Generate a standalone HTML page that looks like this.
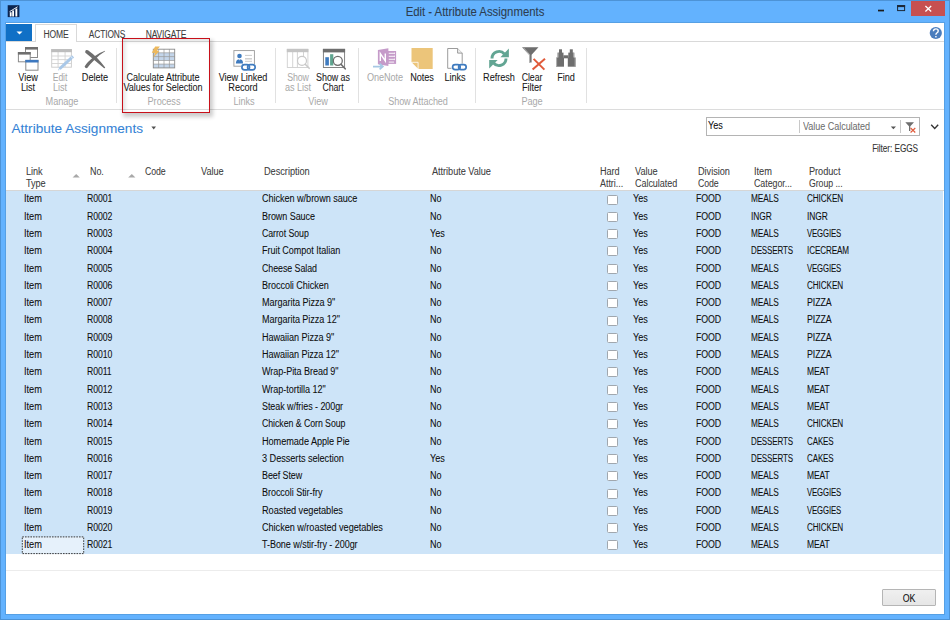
<!DOCTYPE html>
<html><head><meta charset="utf-8"><style>
html,body{margin:0;padding:0;width:950px;height:620px;overflow:hidden;background:#63b2fe}
body{position:relative;font-family:"Liberation Sans",sans-serif}
.t{position:absolute;white-space:pre;-webkit-text-stroke:0.07px currentColor}
.r{position:absolute}
svg{position:absolute;left:0;top:0}
</style></head><body>
<div class="r" style="left:0px;top:0px;width:950px;height:620px;background:#63b2fe"></div>
<div class="r" style="left:0px;top:0px;width:950px;height:1px;background:#4d93d6"></div>
<div class="r" style="left:0px;top:0px;width:1px;height:620px;background:#4d93d6"></div>
<div class="r" style="left:949px;top:0px;width:1px;height:620px;background:#4d93d6"></div>
<div class="r" style="left:0px;top:619px;width:950px;height:1px;background:#4d93d6"></div>
<div class="r" style="left:5px;top:22px;width:940px;height:593px;background:#56a0e4"></div>
<div class="r" style="left:6px;top:23px;width:938px;height:591px;background:#ffffff"></div>
<div class="t" style="left:324.50px;width:300px;text-align:center;top:5.54px;font-size:12px;line-height:12px;color:#2d3d4f;letter-spacing:-0.029px;transform:scaleX(0.9503);transform-origin:center">Edit - Attribute Assignments</div>
<div class="r" style="left:911px;top:1px;width:34px;height:14.5px;background:#c75050"></div>
<div class="r" style="left:6px;top:41px;width:938px;height:1px;background:#d9d9d9"></div>
<div class="r" style="left:6px;top:24px;width:26px;height:17px;background:#1070c6"></div>
<div class="r" style="left:34.5px;top:23.5px;width:42.5px;height:18px;background:#ffffff;border:1px solid #d9d9d9;border-bottom:none;box-sizing:border-box"></div>
<div class="r" style="left:35.5px;top:41px;width:40.5px;height:1px;background:#ffffff"></div>
<div class="t" style="left:-94.30px;width:300px;text-align:center;top:30.00px;font-size:10px;line-height:10px;color:#3c3c3c;letter-spacing:-0.123px;transform:scaleX(0.8518);transform-origin:center">HOME</div>
<div class="t" style="left:-43.30px;width:300px;text-align:center;top:30.00px;font-size:10px;line-height:10px;color:#3c3c3c;letter-spacing:-0.113px;transform:scaleX(0.8398);transform-origin:center">ACTIONS</div>
<div class="t" style="left:16.00px;width:300px;text-align:center;top:30.00px;font-size:10px;line-height:10px;color:#3c3c3c;letter-spacing:-0.110px;transform:scaleX(0.8434);transform-origin:center">NAVIGATE</div>
<div class="r" style="left:6px;top:109px;width:938px;height:1px;background:#dcdcdc"></div>
<div class="r" style="left:115.5px;top:48px;width:1px;height:55px;background:#e1e1e1"></div>
<div class="r" style="left:275.4px;top:48px;width:1px;height:55px;background:#e1e1e1"></div>
<div class="r" style="left:358.2px;top:48px;width:1px;height:55px;background:#e1e1e1"></div>
<div class="r" style="left:474.7px;top:48px;width:1px;height:55px;background:#e1e1e1"></div>
<div class="r" style="left:586.3px;top:48px;width:1px;height:55px;background:#e1e1e1"></div>
<div class="t" style="left:-122.50px;width:300px;text-align:center;top:73.00px;font-size:10px;line-height:10px;color:#1a1a1a;letter-spacing:-0.052px;transform:scaleX(0.9140);transform-origin:center">View</div>
<div class="t" style="left:-122.50px;width:300px;text-align:center;top:83.00px;font-size:10px;line-height:10px;color:#1a1a1a;letter-spacing:-0.038px;transform:scaleX(0.9117);transform-origin:center">List</div>
<div class="t" style="left:-89.70px;width:300px;text-align:center;top:73.00px;font-size:10px;line-height:10px;color:#a8a8a8;letter-spacing:-0.068px;transform:scaleX(0.8587);transform-origin:center;-webkit-text-stroke:0">Edit</div>
<div class="t" style="left:-89.70px;width:300px;text-align:center;top:83.00px;font-size:10px;line-height:10px;color:#a8a8a8;letter-spacing:-0.038px;transform:scaleX(0.9117);transform-origin:center;-webkit-text-stroke:0">List</div>
<div class="t" style="left:-55.50px;width:300px;text-align:center;top:73.00px;font-size:10px;line-height:10px;color:#1a1a1a;letter-spacing:-0.045px;transform:scaleX(0.9167);transform-origin:center">Delete</div>
<div class="t" style="left:-88.40px;width:300px;text-align:center;top:97.00px;font-size:10px;line-height:10px;color:#a9a9a9;letter-spacing:-0.055px;transform:scaleX(0.9177);transform-origin:center;-webkit-text-stroke:0">Manage</div>
<div class="t" style="left:12.50px;width:300px;text-align:center;top:73.00px;font-size:10px;line-height:10px;color:#1a1a1a;letter-spacing:-0.045px;transform:scaleX(0.9066);transform-origin:center">Calculate Attribute</div>
<div class="t" style="left:12.50px;width:300px;text-align:center;top:83.00px;font-size:10px;line-height:10px;color:#1a1a1a;letter-spacing:-0.046px;transform:scaleX(0.9075);transform-origin:center">Values for Selection</div>
<div class="t" style="left:13.90px;width:300px;text-align:center;top:97.00px;font-size:10px;line-height:10px;color:#a9a9a9;letter-spacing:-0.046px;transform:scaleX(0.9198);transform-origin:center;-webkit-text-stroke:0">Process</div>
<div class="t" style="left:92.50px;width:300px;text-align:center;top:73.00px;font-size:10px;line-height:10px;color:#1a1a1a;letter-spacing:-0.047px;transform:scaleX(0.9146);transform-origin:center">View Linked</div>
<div class="t" style="left:92.50px;width:300px;text-align:center;top:83.00px;font-size:10px;line-height:10px;color:#1a1a1a;letter-spacing:-0.049px;transform:scaleX(0.9180);transform-origin:center">Record</div>
<div class="t" style="left:93.70px;width:300px;text-align:center;top:97.00px;font-size:10px;line-height:10px;color:#a9a9a9;letter-spacing:-0.043px;transform:scaleX(0.9173);transform-origin:center;-webkit-text-stroke:0">Links</div>
<div class="t" style="left:147.50px;width:300px;text-align:center;top:73.00px;font-size:10px;line-height:10px;color:#a8a8a8;letter-spacing:-0.083px;transform:scaleX(0.8804);transform-origin:center;-webkit-text-stroke:0">Show</div>
<div class="t" style="left:147.50px;width:300px;text-align:center;top:83.00px;font-size:10px;line-height:10px;color:#a8a8a8;letter-spacing:-0.040px;transform:scaleX(0.9134);transform-origin:center;-webkit-text-stroke:0">as List</div>
<div class="t" style="left:183.00px;width:300px;text-align:center;top:73.00px;font-size:10px;line-height:10px;color:#1a1a1a;letter-spacing:-0.065px;transform:scaleX(0.8926);transform-origin:center">Show as</div>
<div class="t" style="left:183.00px;width:300px;text-align:center;top:83.00px;font-size:10px;line-height:10px;color:#1a1a1a;letter-spacing:-0.068px;transform:scaleX(0.8752);transform-origin:center">Chart</div>
<div class="t" style="left:168.30px;width:300px;text-align:center;top:97.00px;font-size:10px;line-height:10px;color:#a9a9a9;letter-spacing:-0.052px;transform:scaleX(0.9140);transform-origin:center;-webkit-text-stroke:0">View</div>
<div class="t" style="left:235.00px;width:300px;text-align:center;top:73.00px;font-size:10px;line-height:10px;color:#a8a8a8;letter-spacing:-0.057px;transform:scaleX(0.9109);transform-origin:center;-webkit-text-stroke:0">OneNote</div>
<div class="t" style="left:271.80px;width:300px;text-align:center;top:73.00px;font-size:10px;line-height:10px;color:#1a1a1a;letter-spacing:-0.049px;transform:scaleX(0.9155);transform-origin:center">Notes</div>
<div class="t" style="left:305.00px;width:300px;text-align:center;top:73.00px;font-size:10px;line-height:10px;color:#1a1a1a;letter-spacing:-0.043px;transform:scaleX(0.9173);transform-origin:center">Links</div>
<div class="t" style="left:267.80px;width:300px;text-align:center;top:97.00px;font-size:10px;line-height:10px;color:#a9a9a9;letter-spacing:-0.056px;transform:scaleX(0.9034);transform-origin:center;-webkit-text-stroke:0">Show Attached</div>
<div class="t" style="left:349.00px;width:300px;text-align:center;top:73.00px;font-size:10px;line-height:10px;color:#1a1a1a;letter-spacing:-0.045px;transform:scaleX(0.9188);transform-origin:center">Refresh</div>
<div class="t" style="left:381.50px;width:300px;text-align:center;top:73.00px;font-size:10px;line-height:10px;color:#1a1a1a;letter-spacing:-0.067px;transform:scaleX(0.8740);transform-origin:center">Clear</div>
<div class="t" style="left:381.50px;width:300px;text-align:center;top:83.00px;font-size:10px;line-height:10px;color:#1a1a1a;letter-spacing:-0.035px;transform:scaleX(0.9156);transform-origin:center">Filter</div>
<div class="t" style="left:415.80px;width:300px;text-align:center;top:73.00px;font-size:10px;line-height:10px;color:#1a1a1a;letter-spacing:-0.047px;transform:scaleX(0.9137);transform-origin:center">Find</div>
<div class="t" style="left:381.90px;width:300px;text-align:center;top:97.00px;font-size:10px;line-height:10px;color:#a9a9a9;letter-spacing:-0.055px;transform:scaleX(0.9151);transform-origin:center;-webkit-text-stroke:0">Page</div>
<div class="r" style="left:121.7px;top:37.6px;width:88.1px;height:75.1px;border:1.8px solid #c8101a;box-sizing:border-box;box-shadow:2px 2.5px 4px 1px rgba(0,0,0,.2), inset 2px 2px 4px rgba(0,0,0,.13)"></div>
<div class="t" style="left:11.50px;top:122.49px;font-size:13.6px;line-height:13.6px;color:#3583d6">Attribute Assignments</div>
<div class="r" style="left:706px;top:117.3px;width:213.7px;height:18.4px;border:1px solid #b4b4b4;box-sizing:border-box;background:#fff"></div>
<div class="t" style="left:708.40px;top:121.00px;font-size:10px;line-height:10px;color:#0e0e0e;letter-spacing:-0.057px;transform:scaleX(0.9103);transform-origin:left">Yes</div>
<div class="r" style="left:798.5px;top:120px;width:1px;height:13px;background:#c8c8c8"></div>
<div class="t" style="left:802.60px;top:122.00px;font-size:10px;line-height:10px;color:#6a6a6a;letter-spacing:-0.050px;transform:scaleX(0.9048);transform-origin:left;-webkit-text-stroke:0">Value Calculated</div>
<div class="r" style="left:900.3px;top:120px;width:1px;height:13px;background:#c8c8c8"></div>
<div class="t" style="left:618.40px;width:300px;text-align:right;top:144.00px;font-size:10px;line-height:10px;color:#333;letter-spacing:-0.092px;transform:scaleX(0.8253);transform-origin:right">Filter: EGGS</div>
<div class="t" style="left:26.00px;top:167.00px;font-size:10px;line-height:10px;color:#404040;letter-spacing:-0.044px;transform:scaleX(0.9142);transform-origin:left">Link</div>
<div class="t" style="left:26.00px;top:179.00px;font-size:10px;line-height:10px;color:#404040;letter-spacing:-0.052px;transform:scaleX(0.9156);transform-origin:left">Type</div>
<div class="t" style="left:89.50px;top:167.00px;font-size:10px;line-height:10px;color:#404040;letter-spacing:-0.060px;transform:scaleX(0.8955);transform-origin:left">No.</div>
<div class="t" style="left:145.00px;top:167.00px;font-size:10px;line-height:10px;color:#404040;letter-spacing:-0.084px;transform:scaleX(0.8740);transform-origin:left">Code</div>
<div class="t" style="left:200.50px;top:167.00px;font-size:10px;line-height:10px;color:#404040;letter-spacing:-0.048px;transform:scaleX(0.9162);transform-origin:left">Value</div>
<div class="t" style="left:263.50px;top:167.00px;font-size:10px;line-height:10px;color:#404040;letter-spacing:-0.040px;transform:scaleX(0.9217);transform-origin:left">Description</div>
<div class="t" style="left:431.80px;top:167.00px;font-size:10px;line-height:10px;color:#404040;letter-spacing:-0.041px;transform:scaleX(0.9163);transform-origin:left">Attribute Value</div>
<div class="t" style="left:600.30px;top:167.00px;font-size:10px;line-height:10px;color:#404040;letter-spacing:-0.052px;transform:scaleX(0.9128);transform-origin:left">Hard</div>
<div class="t" style="left:600.30px;top:179.00px;font-size:10px;line-height:10px;color:#404040;letter-spacing:-0.038px;transform:scaleX(0.8966);transform-origin:left">Attri...</div>
<div class="t" style="left:634.70px;top:167.00px;font-size:10px;line-height:10px;color:#404040;letter-spacing:-0.048px;transform:scaleX(0.9162);transform-origin:left">Value</div>
<div class="t" style="left:634.70px;top:179.00px;font-size:10px;line-height:10px;color:#404040;letter-spacing:-0.052px;transform:scaleX(0.9009);transform-origin:left">Calculated</div>
<div class="t" style="left:697.90px;top:167.00px;font-size:10px;line-height:10px;color:#404040;letter-spacing:-0.039px;transform:scaleX(0.9188);transform-origin:left">Division</div>
<div class="t" style="left:697.90px;top:179.00px;font-size:10px;line-height:10px;color:#404040;letter-spacing:-0.084px;transform:scaleX(0.8740);transform-origin:left">Code</div>
<div class="t" style="left:753.60px;top:167.00px;font-size:10px;line-height:10px;color:#404040;letter-spacing:-0.042px;transform:scaleX(0.9218);transform-origin:left">Item</div>
<div class="t" style="left:753.60px;top:179.00px;font-size:10px;line-height:10px;color:#404040;letter-spacing:-0.055px;transform:scaleX(0.8870);transform-origin:left">Categor...</div>
<div class="t" style="left:809.10px;top:167.00px;font-size:10px;line-height:10px;color:#404040;letter-spacing:-0.044px;transform:scaleX(0.9194);transform-origin:left">Product</div>
<div class="t" style="left:809.10px;top:179.00px;font-size:10px;line-height:10px;color:#404040;letter-spacing:-0.060px;transform:scaleX(0.8746);transform-origin:left">Group ...</div>
<div class="r" style="left:6px;top:190px;width:938px;height:1px;background:#d6d6d6"></div>
<div class="r" style="left:6px;top:191px;width:937px;height:363px;background:#cde4f8"></div>
<div class="t" style="left:24.00px;top:194.00px;font-size:10px;line-height:10px;color:#0e0e0e;letter-spacing:-0.042px;transform:scaleX(0.9218);transform-origin:left">Item</div>
<div class="t" style="left:87.00px;top:194.00px;font-size:10px;line-height:10px;color:#0e0e0e;letter-spacing:-0.085px;transform:scaleX(0.8699);transform-origin:left">R0001</div>
<div class="t" style="left:261.50px;top:194.00px;font-size:10px;line-height:10px;color:#0e0e0e;letter-spacing:-0.050px;transform:scaleX(0.9112);transform-origin:left">Chicken w/brown sauce</div>
<div class="t" style="left:430.00px;top:194.00px;font-size:10px;line-height:10px;color:#0e0e0e;letter-spacing:-0.070px;transform:scaleX(0.9019);transform-origin:left">No</div>
<div class="t" style="left:632.50px;top:194.00px;font-size:10px;line-height:10px;color:#0e0e0e;letter-spacing:-0.057px;transform:scaleX(0.9103);transform-origin:left">Yes</div>
<div class="t" style="left:695.50px;top:194.00px;font-size:10px;line-height:10px;color:#0e0e0e;letter-spacing:-0.095px;transform:scaleX(0.8815);transform-origin:left">FOOD</div>
<div class="t" style="left:751.00px;top:194.00px;font-size:10px;line-height:10px;color:#0e0e0e;letter-spacing:-0.129px;transform:scaleX(0.8290);transform-origin:left">MEALS</div>
<div class="t" style="left:806.50px;top:194.00px;font-size:10px;line-height:10px;color:#0e0e0e;letter-spacing:-0.129px;transform:scaleX(0.8189);transform-origin:left">CHICKEN</div>
<div class="r" style="left:607.4px;top:194.50px;width:10.3px;height:10px;border:1px solid #a0a7ae;border-radius:1.5px;box-sizing:border-box;background:#fff"></div>
<div class="t" style="left:24.00px;top:212.00px;font-size:10px;line-height:10px;color:#0e0e0e;letter-spacing:-0.042px;transform:scaleX(0.9218);transform-origin:left">Item</div>
<div class="t" style="left:87.00px;top:212.00px;font-size:10px;line-height:10px;color:#0e0e0e;letter-spacing:-0.085px;transform:scaleX(0.8699);transform-origin:left">R0002</div>
<div class="t" style="left:261.50px;top:212.00px;font-size:10px;line-height:10px;color:#0e0e0e;letter-spacing:-0.060px;transform:scaleX(0.9001);transform-origin:left">Brown Sauce</div>
<div class="t" style="left:430.00px;top:212.00px;font-size:10px;line-height:10px;color:#0e0e0e;letter-spacing:-0.070px;transform:scaleX(0.9019);transform-origin:left">No</div>
<div class="t" style="left:632.50px;top:212.00px;font-size:10px;line-height:10px;color:#0e0e0e;letter-spacing:-0.057px;transform:scaleX(0.9103);transform-origin:left">Yes</div>
<div class="t" style="left:695.50px;top:212.00px;font-size:10px;line-height:10px;color:#0e0e0e;letter-spacing:-0.095px;transform:scaleX(0.8815);transform-origin:left">FOOD</div>
<div class="t" style="left:751.00px;top:212.00px;font-size:10px;line-height:10px;color:#0e0e0e;letter-spacing:-0.111px;transform:scaleX(0.8400);transform-origin:left">INGR</div>
<div class="t" style="left:806.50px;top:212.00px;font-size:10px;line-height:10px;color:#0e0e0e;letter-spacing:-0.111px;transform:scaleX(0.8400);transform-origin:left">INGR</div>
<div class="r" style="left:607.4px;top:211.79px;width:10.3px;height:10px;border:1px solid #a0a7ae;border-radius:1.5px;box-sizing:border-box;background:#fff"></div>
<div class="t" style="left:24.00px;top:229.00px;font-size:10px;line-height:10px;color:#0e0e0e;letter-spacing:-0.042px;transform:scaleX(0.9218);transform-origin:left">Item</div>
<div class="t" style="left:87.00px;top:229.00px;font-size:10px;line-height:10px;color:#0e0e0e;letter-spacing:-0.085px;transform:scaleX(0.8699);transform-origin:left">R0003</div>
<div class="t" style="left:261.50px;top:229.00px;font-size:10px;line-height:10px;color:#0e0e0e;letter-spacing:-0.066px;transform:scaleX(0.8788);transform-origin:left">Carrot Soup</div>
<div class="t" style="left:430.00px;top:229.00px;font-size:10px;line-height:10px;color:#0e0e0e;letter-spacing:-0.057px;transform:scaleX(0.9103);transform-origin:left">Yes</div>
<div class="t" style="left:632.50px;top:229.00px;font-size:10px;line-height:10px;color:#0e0e0e;letter-spacing:-0.057px;transform:scaleX(0.9103);transform-origin:left">Yes</div>
<div class="t" style="left:695.50px;top:229.00px;font-size:10px;line-height:10px;color:#0e0e0e;letter-spacing:-0.095px;transform:scaleX(0.8815);transform-origin:left">FOOD</div>
<div class="t" style="left:751.00px;top:229.00px;font-size:10px;line-height:10px;color:#0e0e0e;letter-spacing:-0.129px;transform:scaleX(0.8290);transform-origin:left">MEALS</div>
<div class="t" style="left:806.50px;top:229.00px;font-size:10px;line-height:10px;color:#0e0e0e;letter-spacing:-0.160px;transform:scaleX(0.7761);transform-origin:left">VEGGIES</div>
<div class="r" style="left:607.4px;top:229.09px;width:10.3px;height:10px;border:1px solid #a0a7ae;border-radius:1.5px;box-sizing:border-box;background:#fff"></div>
<div class="t" style="left:24.00px;top:246.00px;font-size:10px;line-height:10px;color:#0e0e0e;letter-spacing:-0.042px;transform:scaleX(0.9218);transform-origin:left">Item</div>
<div class="t" style="left:87.00px;top:246.00px;font-size:10px;line-height:10px;color:#0e0e0e;letter-spacing:-0.085px;transform:scaleX(0.8699);transform-origin:left">R0004</div>
<div class="t" style="left:261.50px;top:246.00px;font-size:10px;line-height:10px;color:#0e0e0e;letter-spacing:-0.046px;transform:scaleX(0.9048);transform-origin:left">Fruit Compot Italian</div>
<div class="t" style="left:430.00px;top:246.00px;font-size:10px;line-height:10px;color:#0e0e0e;letter-spacing:-0.070px;transform:scaleX(0.9019);transform-origin:left">No</div>
<div class="t" style="left:632.50px;top:246.00px;font-size:10px;line-height:10px;color:#0e0e0e;letter-spacing:-0.057px;transform:scaleX(0.9103);transform-origin:left">Yes</div>
<div class="t" style="left:695.50px;top:246.00px;font-size:10px;line-height:10px;color:#0e0e0e;letter-spacing:-0.095px;transform:scaleX(0.8815);transform-origin:left">FOOD</div>
<div class="t" style="left:751.00px;top:246.00px;font-size:10px;line-height:10px;color:#0e0e0e;letter-spacing:-0.151px;transform:scaleX(0.7989);transform-origin:left">DESSERTS</div>
<div class="t" style="left:806.50px;top:246.00px;font-size:10px;line-height:10px;color:#0e0e0e;letter-spacing:-0.138px;transform:scaleX(0.8113);transform-origin:left">ICECREAM</div>
<div class="r" style="left:607.4px;top:246.39px;width:10.3px;height:10px;border:1px solid #a0a7ae;border-radius:1.5px;box-sizing:border-box;background:#fff"></div>
<div class="t" style="left:24.00px;top:264.00px;font-size:10px;line-height:10px;color:#0e0e0e;letter-spacing:-0.042px;transform:scaleX(0.9218);transform-origin:left">Item</div>
<div class="t" style="left:87.00px;top:264.00px;font-size:10px;line-height:10px;color:#0e0e0e;letter-spacing:-0.085px;transform:scaleX(0.8699);transform-origin:left">R0005</div>
<div class="t" style="left:261.50px;top:264.00px;font-size:10px;line-height:10px;color:#0e0e0e;letter-spacing:-0.066px;transform:scaleX(0.8858);transform-origin:left">Cheese Salad</div>
<div class="t" style="left:430.00px;top:264.00px;font-size:10px;line-height:10px;color:#0e0e0e;letter-spacing:-0.070px;transform:scaleX(0.9019);transform-origin:left">No</div>
<div class="t" style="left:632.50px;top:264.00px;font-size:10px;line-height:10px;color:#0e0e0e;letter-spacing:-0.057px;transform:scaleX(0.9103);transform-origin:left">Yes</div>
<div class="t" style="left:695.50px;top:264.00px;font-size:10px;line-height:10px;color:#0e0e0e;letter-spacing:-0.095px;transform:scaleX(0.8815);transform-origin:left">FOOD</div>
<div class="t" style="left:751.00px;top:264.00px;font-size:10px;line-height:10px;color:#0e0e0e;letter-spacing:-0.129px;transform:scaleX(0.8290);transform-origin:left">MEALS</div>
<div class="t" style="left:806.50px;top:264.00px;font-size:10px;line-height:10px;color:#0e0e0e;letter-spacing:-0.160px;transform:scaleX(0.7761);transform-origin:left">VEGGIES</div>
<div class="r" style="left:607.4px;top:263.68px;width:10.3px;height:10px;border:1px solid #a0a7ae;border-radius:1.5px;box-sizing:border-box;background:#fff"></div>
<div class="t" style="left:24.00px;top:281.00px;font-size:10px;line-height:10px;color:#0e0e0e;letter-spacing:-0.042px;transform:scaleX(0.9218);transform-origin:left">Item</div>
<div class="t" style="left:87.00px;top:281.00px;font-size:10px;line-height:10px;color:#0e0e0e;letter-spacing:-0.085px;transform:scaleX(0.8699);transform-origin:left">R0006</div>
<div class="t" style="left:261.50px;top:281.00px;font-size:10px;line-height:10px;color:#0e0e0e;letter-spacing:-0.049px;transform:scaleX(0.9045);transform-origin:left">Broccoli Chicken</div>
<div class="t" style="left:430.00px;top:281.00px;font-size:10px;line-height:10px;color:#0e0e0e;letter-spacing:-0.070px;transform:scaleX(0.9019);transform-origin:left">No</div>
<div class="t" style="left:632.50px;top:281.00px;font-size:10px;line-height:10px;color:#0e0e0e;letter-spacing:-0.057px;transform:scaleX(0.9103);transform-origin:left">Yes</div>
<div class="t" style="left:695.50px;top:281.00px;font-size:10px;line-height:10px;color:#0e0e0e;letter-spacing:-0.095px;transform:scaleX(0.8815);transform-origin:left">FOOD</div>
<div class="t" style="left:751.00px;top:281.00px;font-size:10px;line-height:10px;color:#0e0e0e;letter-spacing:-0.129px;transform:scaleX(0.8290);transform-origin:left">MEALS</div>
<div class="t" style="left:806.50px;top:281.00px;font-size:10px;line-height:10px;color:#0e0e0e;letter-spacing:-0.129px;transform:scaleX(0.8189);transform-origin:left">CHICKEN</div>
<div class="r" style="left:607.4px;top:280.98px;width:10.3px;height:10px;border:1px solid #a0a7ae;border-radius:1.5px;box-sizing:border-box;background:#fff"></div>
<div class="t" style="left:24.00px;top:298.00px;font-size:10px;line-height:10px;color:#0e0e0e;letter-spacing:-0.042px;transform:scaleX(0.9218);transform-origin:left">Item</div>
<div class="t" style="left:87.00px;top:298.00px;font-size:10px;line-height:10px;color:#0e0e0e;letter-spacing:-0.085px;transform:scaleX(0.8699);transform-origin:left">R0007</div>
<div class="t" style="left:261.50px;top:298.00px;font-size:10px;line-height:10px;color:#0e0e0e;letter-spacing:-0.046px;transform:scaleX(0.9086);transform-origin:left">Margarita Pizza 9"</div>
<div class="t" style="left:430.00px;top:298.00px;font-size:10px;line-height:10px;color:#0e0e0e;letter-spacing:-0.070px;transform:scaleX(0.9019);transform-origin:left">No</div>
<div class="t" style="left:632.50px;top:298.00px;font-size:10px;line-height:10px;color:#0e0e0e;letter-spacing:-0.057px;transform:scaleX(0.9103);transform-origin:left">Yes</div>
<div class="t" style="left:695.50px;top:298.00px;font-size:10px;line-height:10px;color:#0e0e0e;letter-spacing:-0.095px;transform:scaleX(0.8815);transform-origin:left">FOOD</div>
<div class="t" style="left:751.00px;top:298.00px;font-size:10px;line-height:10px;color:#0e0e0e;letter-spacing:-0.129px;transform:scaleX(0.8290);transform-origin:left">MEALS</div>
<div class="t" style="left:806.50px;top:298.00px;font-size:10px;line-height:10px;color:#0e0e0e;letter-spacing:-0.075px;transform:scaleX(0.8815);transform-origin:left">PIZZA</div>
<div class="r" style="left:607.4px;top:298.27px;width:10.3px;height:10px;border:1px solid #a0a7ae;border-radius:1.5px;box-sizing:border-box;background:#fff"></div>
<div class="t" style="left:24.00px;top:315.00px;font-size:10px;line-height:10px;color:#0e0e0e;letter-spacing:-0.042px;transform:scaleX(0.9218);transform-origin:left">Item</div>
<div class="t" style="left:87.00px;top:315.00px;font-size:10px;line-height:10px;color:#0e0e0e;letter-spacing:-0.085px;transform:scaleX(0.8699);transform-origin:left">R0008</div>
<div class="t" style="left:261.50px;top:315.00px;font-size:10px;line-height:10px;color:#0e0e0e;letter-spacing:-0.048px;transform:scaleX(0.9059);transform-origin:left">Margarita Pizza 12"</div>
<div class="t" style="left:430.00px;top:315.00px;font-size:10px;line-height:10px;color:#0e0e0e;letter-spacing:-0.070px;transform:scaleX(0.9019);transform-origin:left">No</div>
<div class="t" style="left:632.50px;top:315.00px;font-size:10px;line-height:10px;color:#0e0e0e;letter-spacing:-0.057px;transform:scaleX(0.9103);transform-origin:left">Yes</div>
<div class="t" style="left:695.50px;top:315.00px;font-size:10px;line-height:10px;color:#0e0e0e;letter-spacing:-0.095px;transform:scaleX(0.8815);transform-origin:left">FOOD</div>
<div class="t" style="left:751.00px;top:315.00px;font-size:10px;line-height:10px;color:#0e0e0e;letter-spacing:-0.129px;transform:scaleX(0.8290);transform-origin:left">MEALS</div>
<div class="t" style="left:806.50px;top:315.00px;font-size:10px;line-height:10px;color:#0e0e0e;letter-spacing:-0.075px;transform:scaleX(0.8815);transform-origin:left">PIZZA</div>
<div class="r" style="left:607.4px;top:315.57px;width:10.3px;height:10px;border:1px solid #a0a7ae;border-radius:1.5px;box-sizing:border-box;background:#fff"></div>
<div class="t" style="left:24.00px;top:333.00px;font-size:10px;line-height:10px;color:#0e0e0e;letter-spacing:-0.042px;transform:scaleX(0.9218);transform-origin:left">Item</div>
<div class="t" style="left:87.00px;top:333.00px;font-size:10px;line-height:10px;color:#0e0e0e;letter-spacing:-0.085px;transform:scaleX(0.8699);transform-origin:left">R0009</div>
<div class="t" style="left:261.50px;top:333.00px;font-size:10px;line-height:10px;color:#0e0e0e;letter-spacing:-0.048px;transform:scaleX(0.9089);transform-origin:left">Hawaiian Pizza 9"</div>
<div class="t" style="left:430.00px;top:333.00px;font-size:10px;line-height:10px;color:#0e0e0e;letter-spacing:-0.070px;transform:scaleX(0.9019);transform-origin:left">No</div>
<div class="t" style="left:632.50px;top:333.00px;font-size:10px;line-height:10px;color:#0e0e0e;letter-spacing:-0.057px;transform:scaleX(0.9103);transform-origin:left">Yes</div>
<div class="t" style="left:695.50px;top:333.00px;font-size:10px;line-height:10px;color:#0e0e0e;letter-spacing:-0.095px;transform:scaleX(0.8815);transform-origin:left">FOOD</div>
<div class="t" style="left:751.00px;top:333.00px;font-size:10px;line-height:10px;color:#0e0e0e;letter-spacing:-0.129px;transform:scaleX(0.8290);transform-origin:left">MEALS</div>
<div class="t" style="left:806.50px;top:333.00px;font-size:10px;line-height:10px;color:#0e0e0e;letter-spacing:-0.075px;transform:scaleX(0.8815);transform-origin:left">PIZZA</div>
<div class="r" style="left:607.4px;top:332.86px;width:10.3px;height:10px;border:1px solid #a0a7ae;border-radius:1.5px;box-sizing:border-box;background:#fff"></div>
<div class="t" style="left:24.00px;top:350.00px;font-size:10px;line-height:10px;color:#0e0e0e;letter-spacing:-0.042px;transform:scaleX(0.9218);transform-origin:left">Item</div>
<div class="t" style="left:87.00px;top:350.00px;font-size:10px;line-height:10px;color:#0e0e0e;letter-spacing:-0.085px;transform:scaleX(0.8699);transform-origin:left">R0010</div>
<div class="t" style="left:261.50px;top:350.00px;font-size:10px;line-height:10px;color:#0e0e0e;letter-spacing:-0.050px;transform:scaleX(0.9062);transform-origin:left">Hawaiian Pizza 12"</div>
<div class="t" style="left:430.00px;top:350.00px;font-size:10px;line-height:10px;color:#0e0e0e;letter-spacing:-0.070px;transform:scaleX(0.9019);transform-origin:left">No</div>
<div class="t" style="left:632.50px;top:350.00px;font-size:10px;line-height:10px;color:#0e0e0e;letter-spacing:-0.057px;transform:scaleX(0.9103);transform-origin:left">Yes</div>
<div class="t" style="left:695.50px;top:350.00px;font-size:10px;line-height:10px;color:#0e0e0e;letter-spacing:-0.095px;transform:scaleX(0.8815);transform-origin:left">FOOD</div>
<div class="t" style="left:751.00px;top:350.00px;font-size:10px;line-height:10px;color:#0e0e0e;letter-spacing:-0.129px;transform:scaleX(0.8290);transform-origin:left">MEALS</div>
<div class="t" style="left:806.50px;top:350.00px;font-size:10px;line-height:10px;color:#0e0e0e;letter-spacing:-0.075px;transform:scaleX(0.8815);transform-origin:left">PIZZA</div>
<div class="r" style="left:607.4px;top:350.16px;width:10.3px;height:10px;border:1px solid #a0a7ae;border-radius:1.5px;box-sizing:border-box;background:#fff"></div>
<div class="t" style="left:24.00px;top:367.00px;font-size:10px;line-height:10px;color:#0e0e0e;letter-spacing:-0.042px;transform:scaleX(0.9218);transform-origin:left">Item</div>
<div class="t" style="left:87.00px;top:367.00px;font-size:10px;line-height:10px;color:#0e0e0e;letter-spacing:-0.085px;transform:scaleX(0.8699);transform-origin:left">R0011</div>
<div class="t" style="left:261.50px;top:367.00px;font-size:10px;line-height:10px;color:#0e0e0e;letter-spacing:-0.051px;transform:scaleX(0.9029);transform-origin:left">Wrap-Pita Bread 9"</div>
<div class="t" style="left:430.00px;top:367.00px;font-size:10px;line-height:10px;color:#0e0e0e;letter-spacing:-0.070px;transform:scaleX(0.9019);transform-origin:left">No</div>
<div class="t" style="left:632.50px;top:367.00px;font-size:10px;line-height:10px;color:#0e0e0e;letter-spacing:-0.057px;transform:scaleX(0.9103);transform-origin:left">Yes</div>
<div class="t" style="left:695.50px;top:367.00px;font-size:10px;line-height:10px;color:#0e0e0e;letter-spacing:-0.095px;transform:scaleX(0.8815);transform-origin:left">FOOD</div>
<div class="t" style="left:751.00px;top:367.00px;font-size:10px;line-height:10px;color:#0e0e0e;letter-spacing:-0.129px;transform:scaleX(0.8290);transform-origin:left">MEALS</div>
<div class="t" style="left:806.50px;top:367.00px;font-size:10px;line-height:10px;color:#0e0e0e;letter-spacing:-0.116px;transform:scaleX(0.8494);transform-origin:left">MEAT</div>
<div class="r" style="left:607.4px;top:367.45px;width:10.3px;height:10px;border:1px solid #a0a7ae;border-radius:1.5px;box-sizing:border-box;background:#fff"></div>
<div class="t" style="left:24.00px;top:385.00px;font-size:10px;line-height:10px;color:#0e0e0e;letter-spacing:-0.042px;transform:scaleX(0.9218);transform-origin:left">Item</div>
<div class="t" style="left:87.00px;top:385.00px;font-size:10px;line-height:10px;color:#0e0e0e;letter-spacing:-0.085px;transform:scaleX(0.8699);transform-origin:left">R0012</div>
<div class="t" style="left:261.50px;top:385.00px;font-size:10px;line-height:10px;color:#0e0e0e;letter-spacing:-0.045px;transform:scaleX(0.9041);transform-origin:left">Wrap-tortilla 12"</div>
<div class="t" style="left:430.00px;top:385.00px;font-size:10px;line-height:10px;color:#0e0e0e;letter-spacing:-0.070px;transform:scaleX(0.9019);transform-origin:left">No</div>
<div class="t" style="left:632.50px;top:385.00px;font-size:10px;line-height:10px;color:#0e0e0e;letter-spacing:-0.057px;transform:scaleX(0.9103);transform-origin:left">Yes</div>
<div class="t" style="left:695.50px;top:385.00px;font-size:10px;line-height:10px;color:#0e0e0e;letter-spacing:-0.095px;transform:scaleX(0.8815);transform-origin:left">FOOD</div>
<div class="t" style="left:751.00px;top:385.00px;font-size:10px;line-height:10px;color:#0e0e0e;letter-spacing:-0.129px;transform:scaleX(0.8290);transform-origin:left">MEALS</div>
<div class="t" style="left:806.50px;top:385.00px;font-size:10px;line-height:10px;color:#0e0e0e;letter-spacing:-0.116px;transform:scaleX(0.8494);transform-origin:left">MEAT</div>
<div class="r" style="left:607.4px;top:384.75px;width:10.3px;height:10px;border:1px solid #a0a7ae;border-radius:1.5px;box-sizing:border-box;background:#fff"></div>
<div class="t" style="left:24.00px;top:402.00px;font-size:10px;line-height:10px;color:#0e0e0e;letter-spacing:-0.042px;transform:scaleX(0.9218);transform-origin:left">Item</div>
<div class="t" style="left:87.00px;top:402.00px;font-size:10px;line-height:10px;color:#0e0e0e;letter-spacing:-0.085px;transform:scaleX(0.8699);transform-origin:left">R0013</div>
<div class="t" style="left:261.50px;top:402.00px;font-size:10px;line-height:10px;color:#0e0e0e;letter-spacing:-0.051px;transform:scaleX(0.8942);transform-origin:left">Steak w/fries - 200gr</div>
<div class="t" style="left:430.00px;top:402.00px;font-size:10px;line-height:10px;color:#0e0e0e;letter-spacing:-0.070px;transform:scaleX(0.9019);transform-origin:left">No</div>
<div class="t" style="left:632.50px;top:402.00px;font-size:10px;line-height:10px;color:#0e0e0e;letter-spacing:-0.057px;transform:scaleX(0.9103);transform-origin:left">Yes</div>
<div class="t" style="left:695.50px;top:402.00px;font-size:10px;line-height:10px;color:#0e0e0e;letter-spacing:-0.095px;transform:scaleX(0.8815);transform-origin:left">FOOD</div>
<div class="t" style="left:751.00px;top:402.00px;font-size:10px;line-height:10px;color:#0e0e0e;letter-spacing:-0.129px;transform:scaleX(0.8290);transform-origin:left">MEALS</div>
<div class="t" style="left:806.50px;top:402.00px;font-size:10px;line-height:10px;color:#0e0e0e;letter-spacing:-0.116px;transform:scaleX(0.8494);transform-origin:left">MEAT</div>
<div class="r" style="left:607.4px;top:402.04px;width:10.3px;height:10px;border:1px solid #a0a7ae;border-radius:1.5px;box-sizing:border-box;background:#fff"></div>
<div class="t" style="left:24.00px;top:419.00px;font-size:10px;line-height:10px;color:#0e0e0e;letter-spacing:-0.042px;transform:scaleX(0.9218);transform-origin:left">Item</div>
<div class="t" style="left:87.00px;top:419.00px;font-size:10px;line-height:10px;color:#0e0e0e;letter-spacing:-0.085px;transform:scaleX(0.8699);transform-origin:left">R0014</div>
<div class="t" style="left:261.50px;top:419.00px;font-size:10px;line-height:10px;color:#0e0e0e;letter-spacing:-0.068px;transform:scaleX(0.8791);transform-origin:left">Chicken &amp; Corn Soup</div>
<div class="t" style="left:430.00px;top:419.00px;font-size:10px;line-height:10px;color:#0e0e0e;letter-spacing:-0.070px;transform:scaleX(0.9019);transform-origin:left">No</div>
<div class="t" style="left:632.50px;top:419.00px;font-size:10px;line-height:10px;color:#0e0e0e;letter-spacing:-0.057px;transform:scaleX(0.9103);transform-origin:left">Yes</div>
<div class="t" style="left:695.50px;top:419.00px;font-size:10px;line-height:10px;color:#0e0e0e;letter-spacing:-0.095px;transform:scaleX(0.8815);transform-origin:left">FOOD</div>
<div class="t" style="left:751.00px;top:419.00px;font-size:10px;line-height:10px;color:#0e0e0e;letter-spacing:-0.129px;transform:scaleX(0.8290);transform-origin:left">MEALS</div>
<div class="t" style="left:806.50px;top:419.00px;font-size:10px;line-height:10px;color:#0e0e0e;letter-spacing:-0.129px;transform:scaleX(0.8189);transform-origin:left">CHICKEN</div>
<div class="r" style="left:607.4px;top:419.34px;width:10.3px;height:10px;border:1px solid #a0a7ae;border-radius:1.5px;box-sizing:border-box;background:#fff"></div>
<div class="t" style="left:24.00px;top:437.00px;font-size:10px;line-height:10px;color:#0e0e0e;letter-spacing:-0.042px;transform:scaleX(0.9218);transform-origin:left">Item</div>
<div class="t" style="left:87.00px;top:437.00px;font-size:10px;line-height:10px;color:#0e0e0e;letter-spacing:-0.085px;transform:scaleX(0.8699);transform-origin:left">R0015</div>
<div class="t" style="left:261.50px;top:437.00px;font-size:10px;line-height:10px;color:#0e0e0e;letter-spacing:-0.051px;transform:scaleX(0.9150);transform-origin:left">Homemade Apple Pie</div>
<div class="t" style="left:430.00px;top:437.00px;font-size:10px;line-height:10px;color:#0e0e0e;letter-spacing:-0.070px;transform:scaleX(0.9019);transform-origin:left">No</div>
<div class="t" style="left:632.50px;top:437.00px;font-size:10px;line-height:10px;color:#0e0e0e;letter-spacing:-0.057px;transform:scaleX(0.9103);transform-origin:left">Yes</div>
<div class="t" style="left:695.50px;top:437.00px;font-size:10px;line-height:10px;color:#0e0e0e;letter-spacing:-0.095px;transform:scaleX(0.8815);transform-origin:left">FOOD</div>
<div class="t" style="left:751.00px;top:437.00px;font-size:10px;line-height:10px;color:#0e0e0e;letter-spacing:-0.151px;transform:scaleX(0.7989);transform-origin:left">DESSERTS</div>
<div class="t" style="left:806.50px;top:437.00px;font-size:10px;line-height:10px;color:#0e0e0e;letter-spacing:-0.150px;transform:scaleX(0.8006);transform-origin:left">CAKES</div>
<div class="r" style="left:607.4px;top:436.63px;width:10.3px;height:10px;border:1px solid #a0a7ae;border-radius:1.5px;box-sizing:border-box;background:#fff"></div>
<div class="t" style="left:24.00px;top:454.00px;font-size:10px;line-height:10px;color:#0e0e0e;letter-spacing:-0.042px;transform:scaleX(0.9218);transform-origin:left">Item</div>
<div class="t" style="left:87.00px;top:454.00px;font-size:10px;line-height:10px;color:#0e0e0e;letter-spacing:-0.085px;transform:scaleX(0.8699);transform-origin:left">R0016</div>
<div class="t" style="left:261.50px;top:454.00px;font-size:10px;line-height:10px;color:#0e0e0e;letter-spacing:-0.042px;transform:scaleX(0.9170);transform-origin:left">3 Desserts selection</div>
<div class="t" style="left:430.00px;top:454.00px;font-size:10px;line-height:10px;color:#0e0e0e;letter-spacing:-0.057px;transform:scaleX(0.9103);transform-origin:left">Yes</div>
<div class="t" style="left:632.50px;top:454.00px;font-size:10px;line-height:10px;color:#0e0e0e;letter-spacing:-0.057px;transform:scaleX(0.9103);transform-origin:left">Yes</div>
<div class="t" style="left:695.50px;top:454.00px;font-size:10px;line-height:10px;color:#0e0e0e;letter-spacing:-0.095px;transform:scaleX(0.8815);transform-origin:left">FOOD</div>
<div class="t" style="left:751.00px;top:454.00px;font-size:10px;line-height:10px;color:#0e0e0e;letter-spacing:-0.151px;transform:scaleX(0.7989);transform-origin:left">DESSERTS</div>
<div class="t" style="left:806.50px;top:454.00px;font-size:10px;line-height:10px;color:#0e0e0e;letter-spacing:-0.150px;transform:scaleX(0.8006);transform-origin:left">CAKES</div>
<div class="r" style="left:607.4px;top:453.93px;width:10.3px;height:10px;border:1px solid #a0a7ae;border-radius:1.5px;box-sizing:border-box;background:#fff"></div>
<div class="t" style="left:24.00px;top:471.00px;font-size:10px;line-height:10px;color:#0e0e0e;letter-spacing:-0.042px;transform:scaleX(0.9218);transform-origin:left">Item</div>
<div class="t" style="left:87.00px;top:471.00px;font-size:10px;line-height:10px;color:#0e0e0e;letter-spacing:-0.085px;transform:scaleX(0.8699);transform-origin:left">R0017</div>
<div class="t" style="left:261.50px;top:471.00px;font-size:10px;line-height:10px;color:#0e0e0e;letter-spacing:-0.061px;transform:scaleX(0.8914);transform-origin:left">Beef Stew</div>
<div class="t" style="left:430.00px;top:471.00px;font-size:10px;line-height:10px;color:#0e0e0e;letter-spacing:-0.070px;transform:scaleX(0.9019);transform-origin:left">No</div>
<div class="t" style="left:632.50px;top:471.00px;font-size:10px;line-height:10px;color:#0e0e0e;letter-spacing:-0.057px;transform:scaleX(0.9103);transform-origin:left">Yes</div>
<div class="t" style="left:695.50px;top:471.00px;font-size:10px;line-height:10px;color:#0e0e0e;letter-spacing:-0.095px;transform:scaleX(0.8815);transform-origin:left">FOOD</div>
<div class="t" style="left:751.00px;top:471.00px;font-size:10px;line-height:10px;color:#0e0e0e;letter-spacing:-0.129px;transform:scaleX(0.8290);transform-origin:left">MEALS</div>
<div class="t" style="left:806.50px;top:471.00px;font-size:10px;line-height:10px;color:#0e0e0e;letter-spacing:-0.116px;transform:scaleX(0.8494);transform-origin:left">MEAT</div>
<div class="r" style="left:607.4px;top:471.22px;width:10.3px;height:10px;border:1px solid #a0a7ae;border-radius:1.5px;box-sizing:border-box;background:#fff"></div>
<div class="t" style="left:24.00px;top:488.00px;font-size:10px;line-height:10px;color:#0e0e0e;letter-spacing:-0.042px;transform:scaleX(0.9218);transform-origin:left">Item</div>
<div class="t" style="left:87.00px;top:488.00px;font-size:10px;line-height:10px;color:#0e0e0e;letter-spacing:-0.085px;transform:scaleX(0.8699);transform-origin:left">R0018</div>
<div class="t" style="left:261.50px;top:488.00px;font-size:10px;line-height:10px;color:#0e0e0e;letter-spacing:-0.044px;transform:scaleX(0.9005);transform-origin:left">Broccoli Stir-fry</div>
<div class="t" style="left:430.00px;top:488.00px;font-size:10px;line-height:10px;color:#0e0e0e;letter-spacing:-0.070px;transform:scaleX(0.9019);transform-origin:left">No</div>
<div class="t" style="left:632.50px;top:488.00px;font-size:10px;line-height:10px;color:#0e0e0e;letter-spacing:-0.057px;transform:scaleX(0.9103);transform-origin:left">Yes</div>
<div class="t" style="left:695.50px;top:488.00px;font-size:10px;line-height:10px;color:#0e0e0e;letter-spacing:-0.095px;transform:scaleX(0.8815);transform-origin:left">FOOD</div>
<div class="t" style="left:751.00px;top:488.00px;font-size:10px;line-height:10px;color:#0e0e0e;letter-spacing:-0.129px;transform:scaleX(0.8290);transform-origin:left">MEALS</div>
<div class="t" style="left:806.50px;top:488.00px;font-size:10px;line-height:10px;color:#0e0e0e;letter-spacing:-0.160px;transform:scaleX(0.7761);transform-origin:left">VEGGIES</div>
<div class="r" style="left:607.4px;top:488.52px;width:10.3px;height:10px;border:1px solid #a0a7ae;border-radius:1.5px;box-sizing:border-box;background:#fff"></div>
<div class="t" style="left:24.00px;top:506.00px;font-size:10px;line-height:10px;color:#0e0e0e;letter-spacing:-0.042px;transform:scaleX(0.9218);transform-origin:left">Item</div>
<div class="t" style="left:87.00px;top:506.00px;font-size:10px;line-height:10px;color:#0e0e0e;letter-spacing:-0.085px;transform:scaleX(0.8699);transform-origin:left">R0019</div>
<div class="t" style="left:261.50px;top:506.00px;font-size:10px;line-height:10px;color:#0e0e0e;letter-spacing:-0.042px;transform:scaleX(0.9227);transform-origin:left">Roasted vegetables</div>
<div class="t" style="left:430.00px;top:506.00px;font-size:10px;line-height:10px;color:#0e0e0e;letter-spacing:-0.070px;transform:scaleX(0.9019);transform-origin:left">No</div>
<div class="t" style="left:632.50px;top:506.00px;font-size:10px;line-height:10px;color:#0e0e0e;letter-spacing:-0.057px;transform:scaleX(0.9103);transform-origin:left">Yes</div>
<div class="t" style="left:695.50px;top:506.00px;font-size:10px;line-height:10px;color:#0e0e0e;letter-spacing:-0.095px;transform:scaleX(0.8815);transform-origin:left">FOOD</div>
<div class="t" style="left:751.00px;top:506.00px;font-size:10px;line-height:10px;color:#0e0e0e;letter-spacing:-0.129px;transform:scaleX(0.8290);transform-origin:left">MEALS</div>
<div class="t" style="left:806.50px;top:506.00px;font-size:10px;line-height:10px;color:#0e0e0e;letter-spacing:-0.160px;transform:scaleX(0.7761);transform-origin:left">VEGGIES</div>
<div class="r" style="left:607.4px;top:505.81px;width:10.3px;height:10px;border:1px solid #a0a7ae;border-radius:1.5px;box-sizing:border-box;background:#fff"></div>
<div class="t" style="left:24.00px;top:523.00px;font-size:10px;line-height:10px;color:#0e0e0e;letter-spacing:-0.042px;transform:scaleX(0.9218);transform-origin:left">Item</div>
<div class="t" style="left:87.00px;top:523.00px;font-size:10px;line-height:10px;color:#0e0e0e;letter-spacing:-0.085px;transform:scaleX(0.8699);transform-origin:left">R0020</div>
<div class="t" style="left:261.50px;top:523.00px;font-size:10px;line-height:10px;color:#0e0e0e;letter-spacing:-0.045px;transform:scaleX(0.9148);transform-origin:left">Chicken w/roasted vegetables</div>
<div class="t" style="left:430.00px;top:523.00px;font-size:10px;line-height:10px;color:#0e0e0e;letter-spacing:-0.070px;transform:scaleX(0.9019);transform-origin:left">No</div>
<div class="t" style="left:632.50px;top:523.00px;font-size:10px;line-height:10px;color:#0e0e0e;letter-spacing:-0.057px;transform:scaleX(0.9103);transform-origin:left">Yes</div>
<div class="t" style="left:695.50px;top:523.00px;font-size:10px;line-height:10px;color:#0e0e0e;letter-spacing:-0.095px;transform:scaleX(0.8815);transform-origin:left">FOOD</div>
<div class="t" style="left:751.00px;top:523.00px;font-size:10px;line-height:10px;color:#0e0e0e;letter-spacing:-0.129px;transform:scaleX(0.8290);transform-origin:left">MEALS</div>
<div class="t" style="left:806.50px;top:523.00px;font-size:10px;line-height:10px;color:#0e0e0e;letter-spacing:-0.129px;transform:scaleX(0.8189);transform-origin:left">CHICKEN</div>
<div class="r" style="left:607.4px;top:523.11px;width:10.3px;height:10px;border:1px solid #a0a7ae;border-radius:1.5px;box-sizing:border-box;background:#fff"></div>
<svg style="left:0;top:0" width="950" height="620"><rect x="22.3" y="536.9" width="61.4" height="16.7" fill="#e6f1fb" stroke="#3a3a3a" stroke-width="1" stroke-dasharray="1.6 1.1"/></svg>
<div class="t" style="left:24.00px;top:540.00px;font-size:10px;line-height:10px;color:#0e0e0e;letter-spacing:-0.042px;transform:scaleX(0.9218);transform-origin:left">Item</div>
<div class="t" style="left:87.00px;top:540.00px;font-size:10px;line-height:10px;color:#0e0e0e;letter-spacing:-0.085px;transform:scaleX(0.8699);transform-origin:left">R0021</div>
<div class="t" style="left:261.50px;top:540.00px;font-size:10px;line-height:10px;color:#0e0e0e;letter-spacing:-0.047px;transform:scaleX(0.9010);transform-origin:left">T-Bone w/stir-fry - 200gr</div>
<div class="t" style="left:430.00px;top:540.00px;font-size:10px;line-height:10px;color:#0e0e0e;letter-spacing:-0.070px;transform:scaleX(0.9019);transform-origin:left">No</div>
<div class="t" style="left:632.50px;top:540.00px;font-size:10px;line-height:10px;color:#0e0e0e;letter-spacing:-0.057px;transform:scaleX(0.9103);transform-origin:left">Yes</div>
<div class="t" style="left:695.50px;top:540.00px;font-size:10px;line-height:10px;color:#0e0e0e;letter-spacing:-0.095px;transform:scaleX(0.8815);transform-origin:left">FOOD</div>
<div class="t" style="left:751.00px;top:540.00px;font-size:10px;line-height:10px;color:#0e0e0e;letter-spacing:-0.129px;transform:scaleX(0.8290);transform-origin:left">MEALS</div>
<div class="t" style="left:806.50px;top:540.00px;font-size:10px;line-height:10px;color:#0e0e0e;letter-spacing:-0.116px;transform:scaleX(0.8494);transform-origin:left">MEAT</div>
<div class="r" style="left:607.4px;top:540.40px;width:10.3px;height:10px;border:1px solid #a0a7ae;border-radius:1.5px;box-sizing:border-box;background:#fff"></div>
<div class="r" style="left:6px;top:570px;width:938px;height:1px;background:#ececec"></div>
<div class="r" style="left:881.8px;top:588.9px;width:54.7px;height:17.6px;border:1px solid #b5b5b5;border-radius:1px;box-sizing:border-box;background:linear-gradient(#f0f0f0,#e6e6e6)"></div>
<div class="t" style="left:759.20px;width:300px;text-align:center;top:594.00px;font-size:10px;line-height:10px;color:#0e0e0e;letter-spacing:-0.095px;transform:scaleX(0.8815);transform-origin:center">OK</div>
<svg width="950" height="620" viewBox="0 0 950 620">
<!-- app icon -->
<rect x="7.7" y="5.2" width="11.7" height="11.9" fill="#0b2550"/>
<path d="M9.8 12.2h1.8v4.3h-1.8zM12.2 10.6h1.8v5.9h-1.8zM15.4 8.4h1.9v8.1h-1.9z" fill="#fff"/>
<path d="M9.6 11.6 L17.6 6.8" stroke="#fff" stroke-width="0.9"/>
<!-- window buttons -->
<rect x="878" y="9.7" width="6" height="1.7" fill="#1a1a1a"/>
<rect x="897.6" y="5.6" width="7" height="5" fill="none" stroke="#1c2838" stroke-width="1"/>
<rect x="897.1" y="5.1" width="8" height="2" fill="#1c2838"/>
<path d="M925.4 6 L931.2 11.4 M931.2 6 L925.4 11.4" stroke="#fff" stroke-width="1.3"/>
<!-- help -->
<circle cx="935.8" cy="33" r="6.1" fill="#4a7dbd"/>
<path d="M933.4 31.2 Q933.6 28.9 935.9 28.9 Q938.2 28.9 938.2 30.9 Q938.2 32.2 936.8 33 Q935.9 33.6 935.9 34.8" fill="none" stroke="#fff" stroke-width="1.4"/>
<rect x="935.2" y="36" width="1.4" height="1.4" fill="#fff"/>
<!-- dropdown triangle -->
<path d="M16.5 31.4 L22.5 31.4 L19.5 34.6 Z" fill="#fff"/>
<!-- View List icon -->
<g fill="#fff" stroke="#8a8a8a" stroke-width="1">
<rect x="25.5" y="47.5" width="12" height="10"/>
<rect x="18.4" y="52.5" width="11.8" height="9.3"/>
<rect x="25.8" y="60.4" width="12.2" height="9.8"/>
</g>
<rect x="25" y="47" width="13" height="2.6" fill="#6f6f6f"/>
<rect x="17.9" y="52" width="12.8" height="2.6" fill="#6f6f6f"/>
<rect x="25.3" y="59.9" width="13.2" height="2.6" fill="#3d78bf"/>
<!-- Edit List icon -->
<rect x="51.7" y="49.6" width="19.7" height="17.6" fill="#fff" stroke="#cfcfcf" stroke-width="1"/>
<path d="M51.7 56H71.4M51.7 59.6H71.4M51.7 63.5H71.4M58.1 52V67.2M65.1 52V67.2" stroke="#d3d3d3" stroke-width="0.9"/>
<rect x="51.2" y="49.1" width="20.7" height="3.1" fill="#bdbdbd"/>
<path d="M58.1 70.4 L58.9 67.4 L72 55.2 L74.1 57.4 L61 69.6 Z" fill="#a9c8e8"/>
<path d="M58.2 68.2 L60.4 70.2 M70.6 56.3 L72.8 58.4" stroke="#fff" stroke-width="0.7"/>
<!-- Delete X -->
<path d="M85.3 51.2 Q85.8 49.2 88 50.3 Q97 56.5 105.2 67.6 Q104.8 68.6 103.8 68 Q95 60.5 86 53.2 Q84.8 52.5 85.3 51.2 Z" fill="#6e6e6e"/>
<path d="M84.6 66.5 Q87 62 95 56 Q100 52.5 105 50.8 Q105.3 51.4 104.8 51.6 Q100 54.5 96 58.5 Q90 64 87.5 67.8 Q85.5 69 84.6 66.5 Z" fill="#6e6e6e"/>
<!-- Calculate icon -->
<g>
<rect x="153.3" y="49.2" width="21.4" height="18.7" fill="#fff"/>
<rect x="153.3" y="52.8" width="21.4" height="7.7" fill="#c3d5ea"/>
<rect x="153.3" y="64.1" width="21.4" height="3.8" fill="#c3d5ea"/>
<path d="M153.3 52.8H174.7M153.3 56.6H174.7M153.3 60.5H174.7M153.3 64.1H174.7M158.6 49.2V67.9M164 49.2V67.9M169.4 49.2V67.9" stroke="#999" stroke-width="0.7"/>
<rect x="153.3" y="49.2" width="21.4" height="18.7" fill="none" stroke="#8a8a8a" stroke-width="0.9"/>
<path d="M155.1 46.5 L159.9 46.5 L156.9 50.2 L159.2 51.2 L153 58.1 L155.1 52.9 L151.8 52.7 Z" fill="#edb95e"/>
</g>
<!-- View Linked Record icon -->
<rect x="233.9" y="50.6" width="20.5" height="15.6" fill="#fff" stroke="#9a9a9a" stroke-width="0.9"/>
<circle cx="239.5" cy="56" r="2.3" fill="#3f7bbf"/>
<path d="M235.9 63.6 Q235.9 59.2 239.5 59.2 Q243.1 59.2 243.1 63.6 Z" fill="#3f7bbf"/>
<path d="M238.7 59.2 L239.5 60.6 L240.3 59.2 Z" fill="#fff"/>
<path d="M245 55.4H252M245 61.3H252" stroke="#b5b5b5" stroke-width="0.7"/>
<path d="M245 58.8H252" stroke="#cfcfcf" stroke-width="1.5"/>
<rect x="241" y="64" width="15.5" height="6.6" fill="#fff"/>
<rect x="241.9" y="64.7" width="7.6" height="5.1" rx="2.55" fill="none" stroke="#3f7bbf" stroke-width="1.7"/>
<rect x="247.6" y="64.7" width="7.6" height="5.1" rx="2.55" fill="none" stroke="#3f7bbf" stroke-width="1.7"/>
<!-- Show as List (disabled) -->
<g stroke="#cfcfcf" fill="none" stroke-width="0.9">
<rect x="287.3" y="49.3" width="20.6" height="18.2"/>
<path d="M292.7 51.5V67.5M297.4 51.5V67.5M303.5 51.5V56.5"/>
</g>
<rect x="286.8" y="48.9" width="21.6" height="3.3" fill="#c4c4c4"/>
<circle cx="302" cy="60.8" r="4.5" fill="#fff" stroke="#c9c9c9" stroke-width="1.2"/>
<path d="M305.2 64.2 L309.2 68.3" stroke="#c9c9c9" stroke-width="1.6" stroke-linecap="round"/>
<!-- Show as Chart -->
<rect x="323.4" y="49.3" width="21.2" height="18.2" fill="#fff" stroke="#777" stroke-width="0.9"/>
<rect x="322.9" y="48.9" width="22.2" height="3.5" fill="#6e6e6e"/>
<rect x="325.3" y="57.2" width="3.6" height="8.3" fill="#3f7bbf"/>
<rect x="330.1" y="54.2" width="3.2" height="11.3" fill="#5fa58f"/>
<circle cx="337.8" cy="60.8" r="4.5" fill="#fff" stroke="#6e6e6e" stroke-width="1.3"/>
<path d="M341 64.2 L345.2 68.8" stroke="#6e6e6e" stroke-width="1.7" stroke-linecap="round"/>
<!-- OneNote -->
<rect x="386" y="51" width="10.1" height="12.9" fill="#c59bc9"/>
<path d="M388.6 53.3h5.5M388.6 56.3h5.5M388.6 59.3h5.5M388.6 62.1h5.5" stroke="#fff" stroke-width="0.9"/>
<path d="M394.5 52.5v1.6M394.5 55.5v1.6M394.5 58.5v1.6" stroke="#fff" stroke-width="0.8"/>
<path d="M377.9 50 L388.4 48.3 L388.4 66 L377.9 64.3 Z" fill="#c59bc9"/>
<path d="M380.3 61 V53.6 L385.3 61 V53.6" stroke="#fff" stroke-width="1.4" fill="none"/>
<path d="M373 66.6 H382.5 M379.6 63.8 L382.8 66.6 L379.6 69.4" stroke="#a6c8e4" stroke-width="1.8" fill="none"/>
<!-- Notes -->
<path d="M411.5 48.1 H432.7 V68.9 H418.6 L411.5 62 Z" fill="#ecc57a"/>
<path d="M412 62.6 H417.9 V68.5 Z" fill="#ecc57a"/>
<path d="M411.7 62.3 H418.1 V68.9" stroke="#fff" stroke-width="0.8" fill="none"/>
<!-- Links -->
<path d="M447.7 48.5 H457.6 L462.2 53.1 V68.3 H447.7 Z" fill="#fff" stroke="#8a8a8a" stroke-width="0.85"/>
<path d="M457.6 48.5 V53.1 H462.2" fill="#f0f0f0" stroke="#8a8a8a" stroke-width="0.85"/>
<rect x="451.5" y="63.6" width="16" height="6.6" fill="#fff"/>
<rect x="452.6" y="64.6" width="7.6" height="5" rx="2.5" fill="none" stroke="#3f7bbf" stroke-width="1.7"/>
<rect x="458.6" y="64.6" width="7.6" height="5" rx="2.5" fill="none" stroke="#3f7bbf" stroke-width="1.7"/>
<!-- Refresh -->
<path d="M492 58.5 A7 7 0 0 1 504.4 54" fill="none" stroke="#62a593" stroke-width="2.9"/>
<path d="M508.9 48.6 L508.9 57.2 L500.4 57.2 Z" fill="#62a593"/>
<path d="M506 58.5 A7 7 0 0 1 493.6 63" fill="none" stroke="#62a593" stroke-width="2.9"/>
<path d="M489.2 68.4 L489.2 59.9 L497.6 59.9 Z" fill="#62a593"/>
<!-- Clear filter -->
<path d="M522 47.3 H538.5 L531.6 54.8 V62.6 H529 V54.8 Z" fill="#6e6e6e"/>
<path d="M523.5 47.8 L529.6 54.6 V62.4" stroke="#c4c4c4" stroke-width="0.9" fill="none"/>
<path d="M532.6 69.6 L545 58.7 M533.6 58.9 L544.4 69.6" stroke="#e05a3a" stroke-width="2"/>
<!-- Find binoculars -->
<g fill="#6e6e6e">
<rect x="559" y="49.3" width="3" height="4"/>
<rect x="569.8" y="49.3" width="3" height="4"/>
<rect x="557.5" y="52.6" width="6" height="5.5"/>
<rect x="568.3" y="52.6" width="6" height="5.5"/>
<rect x="556" y="57.6" width="8" height="9.1"/>
<rect x="567.8" y="57.6" width="8" height="9.1"/>
<rect x="563.4" y="55.3" width="5" height="3"/>
</g>
<path d="M556.6 58 V66.5 M575.2 58 V66.5 M558 53 V57.5 M573.8 53 V57.5" stroke="#c8c8c8" stroke-width="0.8"/>
<!-- page title dropdown arrow -->
<path d="M151.4 126.6 L156 126.6 L153.7 129.6 Z" fill="#505050"/>
<!-- sort arrows -->
<path d="M72.6 177.6 L79.8 177.6 L76.2 174 Z" fill="#a8a8a8"/>
<path d="M128.2 177.6 L135.4 177.6 L131.8 174 Z" fill="#a8a8a8"/>
<!-- filter box dropdown -->
<path d="M890.8 126.5 L896 126.5 L893.4 129.3 Z" fill="#555"/>
<!-- filter box clear icon -->
<path d="M905.3 122.2 H914 L910.3 126.2 V131 H909 V126.2 Z" fill="#6e6e6e"/>
<path d="M910.6 128 L915.3 132.5 M915.3 128 L910.6 132.5" stroke="#e05a3a" stroke-width="1.1"/>
<!-- chevron -->
<path d="M931.2 124.8 L934.7 128.4 L938.2 124.8" fill="none" stroke="#333" stroke-width="1.4"/>
</svg>

</body></html>
